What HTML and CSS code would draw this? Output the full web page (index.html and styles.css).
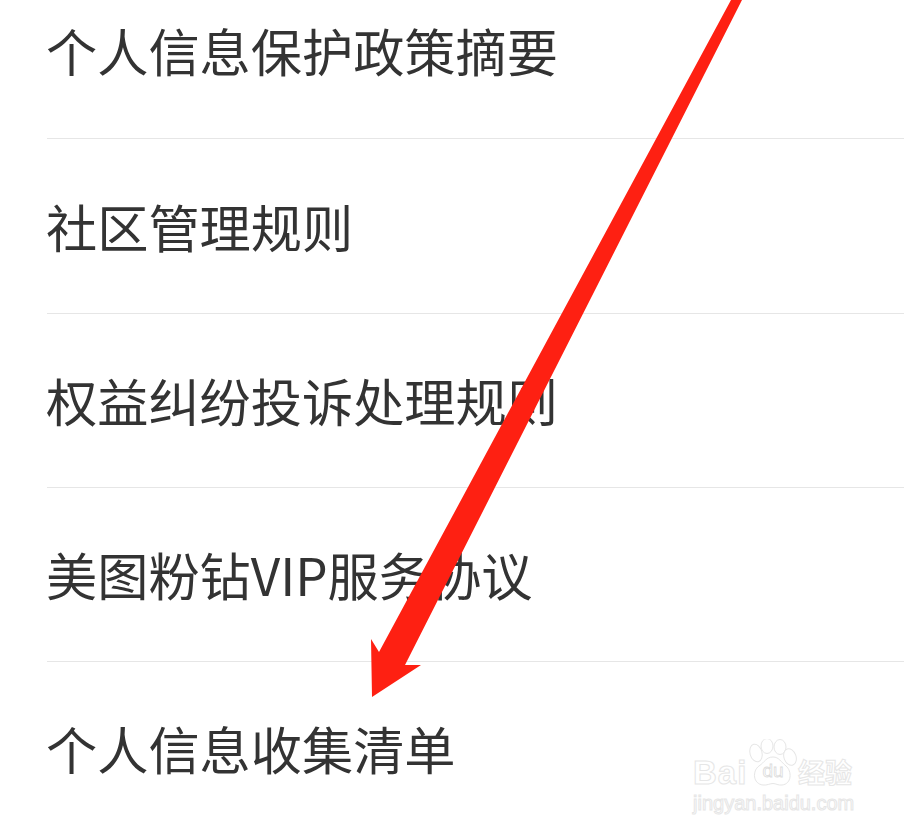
FILE: index.html
```html
<!DOCTYPE html>
<html lang="zh-CN">
<head>
<meta charset="utf-8">
<title>个人信息收集清单</title>
<link rel="stylesheet" href="styles.css">
</head>
<body>
<ul class="list">
  <li class="row row-first">个人信息保护政策摘要</li>
  <li class="row">社区管理规则</li>
  <li class="row">权益纠纷投诉处理规则</li>
  <li class="row">美图粉钻VIP服务协议</li>
  <li class="row">个人信息收集清单</li>
</ul>
<svg class="arrow" viewBox="0 0 904 834" aria-hidden="true">
  <polygon points="731,0 742,0 405,665 421,665 372,697 371,639 379,652" fill="#fe2012"/>
</svg>
<div class="mark">
  <div class="mark-top">
    <span class="mark-text mark-bai">Bai</span>
    <svg class="paw" viewBox="0 0 50 48" aria-hidden="true">
      <g fill="#fff" stroke="#e6e6e6" stroke-width="1">
        <ellipse cx="8" cy="14" rx="6" ry="9" transform="rotate(-15 8 14)"/>
        <ellipse cx="19" cy="7" rx="6" ry="7.500"/>
        <ellipse cx="32" cy="8" rx="6" ry="7.500"/>
        <ellipse cx="42" cy="18" rx="6" ry="8.500" transform="rotate(-20 42 18)"/>
        <path d="M25 18c6 0 8 5 13 9 6 5 6 18-4 19-4 .5-6-1.500-9-1.500s-6 2-10 1.500c-10-1-11-14-4-19 6-4 7-9 14-9z"/>
      </g>
      <text x="25" y="38" class="paw-du">du</text>
    </svg>
    <span class="mark-text mark-cn">经验</span>
  </div>
  <div class="mark-text mark-url">jingyan.baidu.com</div>
</div>
</body>
</html>
```
FILE: styles.css
```css
html, body {
  margin: 0;
  padding: 0;
  height: 834px;
  overflow: hidden;
  background: #fff;
}

body {
  position: relative;
  font-family: "Noto Sans CJK SC", "Noto Sans", sans-serif;
  color: #333;
}

.list {
  list-style: none;
  margin: 0;
  padding: 0 0 0 47px;
}

.row {
  display: flex;
  align-items: center;
  box-sizing: border-box;
  height: 174.200px;
  padding-top: 1px;
  font-size: 51.200px;
  line-height: 1;
  text-indent: -1px;
  border-bottom: 1.500px solid #e6e6e6;
}

.row-first {
  height: 139.400px;
  padding-top: 0;
  align-items: flex-end;
  padding-bottom: 62px;
}

.arrow {
  position: absolute;
  left: 0;
  top: 0;
  width: 904px;
  height: 834px;
}

.mark {
  position: absolute;
  left: 693px;
  top: 737px;
  width: 165px;
}

.mark-top {
  display: flex;
  align-items: flex-end;
  height: 50px;
}

.mark-text {
  color: #fff;
  -webkit-text-stroke: 1px #e6e6e6;
  font-family: "Liberation Sans", sans-serif;
  font-weight: 700;
}

.mark-bai {
  width: 55px;
  font-size: 33px;
  line-height: 28px;
  letter-spacing: 1px;
}

.paw {
  width: 50px;
  height: 48px;
  flex: none;
}

.paw-du {
  font-family: "Liberation Sans", sans-serif;
  font-size: 19px;
  fill: #fff;
  stroke: #dcdcdc;
  stroke-width: 0.8px;
  text-anchor: middle;
}

.mark-cn {
  font-family: "Noto Sans CJK SC", sans-serif;
  font-size: 27px;
  line-height: 30px;
  white-space: nowrap;
}

.mark-url {
  margin-top: 4px;
  font-size: 20px;
  font-weight: 400;
  line-height: 24px;
  white-space: nowrap;
}
```
